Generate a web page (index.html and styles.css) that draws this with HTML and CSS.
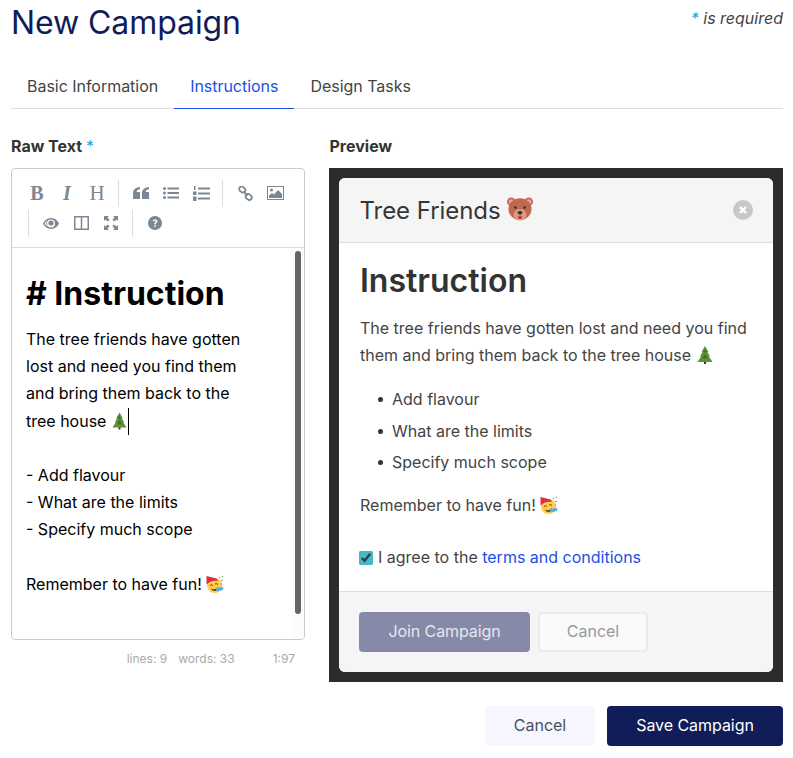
FILE: index.html
```html
<!DOCTYPE html>
<html lang="en">
<head>
    <meta charset="UTF-8">
    <meta name="viewport" content="width=device-width, initial-scale=1.0">
    <title>New Campaign</title>
    <link rel="stylesheet" href="styles.css">
</head>
<body>
    <svg class="sprites" width="0" height="0">
        <defs>
            <symbol id="tree" viewBox="0 0 36 36">
                <rect x="16" y="30" width="4" height="6" fill="#662113"/>
                <path d="M18 0 11 12h2L8 21h2L3 32h30L26 21h2l-5-9h2z" fill="#5c913b"/>
                <path d="M18 6l-3 7h6zM18 16l-5 9h10z" fill="#3e721d"/>
            </symbol>
            <symbol id="party" viewBox="0 0 36 36">
                <circle cx="17" cy="21" r="15" fill="#ffcc4d"/>
                <path d="M1 19 1 2l20 5 3 5C15 10 7 13 1 19z" fill="#dd2e44"/>
                <path d="M8 21q3-3 6 0M18 18q3-2 6 1" fill="none" stroke="#664500" stroke-width="2"/>
                <path d="M10 27q8 4 14-3-1 8-7 8-5 0-7-5z" fill="#664500"/>
                <path d="M19 27l11-3 5 1-1 5-12 3z" fill="#55acee"/>
                <circle cx="27" cy="5" r="1.5" fill="#55acee"/>
                <circle cx="32" cy="11" r="1.5" fill="#dd2e44"/>
                <circle cx="33" cy="3" r="1.5" fill="#77b255"/>
                <circle cx="31" cy="18" r="1.5" fill="#55acee"/>
            </symbol>
            <symbol id="bear" viewBox="0 0 36 36">
                <circle cx="6" cy="8" r="6" fill="#c1694f"/>
                <circle cx="30" cy="8" r="6" fill="#c1694f"/>
                <circle cx="6" cy="8" r="3.5" fill="#e6aaaa"/>
                <circle cx="30" cy="8" r="3.5" fill="#e6aaaa"/>
                <ellipse cx="18" cy="18" rx="16" ry="15" fill="#c1694f"/>
                <ellipse cx="18" cy="26" rx="9" ry="8" fill="#d99e82"/>
                <circle cx="11.5" cy="16" r="1.8" fill="#292f33"/>
                <circle cx="24.5" cy="16" r="1.8" fill="#292f33"/>
                <ellipse cx="18" cy="23" rx="3.5" ry="2.3" fill="#292f33"/>
                <path d="M18 25v2" stroke="#292f33" stroke-width="1.2"/>
                <path d="M15 28h6q0 4-3 4t-3-4z" fill="#dd2e44"/>
            </symbol>
        </defs>
    </svg>

    <div class="page">
        <div class="page-head">
            <h1 class="page-title">New Campaign</h1>
            <div class="required-note"><span class="star">*</span> is required</div>
        </div>

        <div class="tabs">
            <a class="tab">Basic Information</a>
            <a class="tab active">Instructions</a>
            <a class="tab">Design Tasks</a>
        </div>

        <div class="columns">
            <div class="col-raw">
                <div class="field-label">Raw Text <span class="star">*</span></div>
                <div class="editor">
                    <div class="toolbar">
                        <span class="tool glyph-b">B</span>
                        <span class="tool glyph-i">I</span>
                        <span class="tool glyph-h">H</span>
                        <i class="sep"></i>
                        <span class="tool">
                            <svg width="16" height="12" viewBox="0 0 16 12"><path d="M0 6.5C0 3 2 .5 7 0v2.300C5 2.600 3.800 3.400 3.600 5H7v7H0zM9 6.500C9 3 11 .5 16 0v2.300C14 2.600 12.800 3.400 12.600 5H16v7H9z" fill="#7c8792"/></svg>
                        </span>
                        <span class="tool">
                            <svg width="16" height="12" viewBox="0 0 16 12"><g fill="#7c8792"><circle cx="1.5" cy="1.5" r="1.5"/><circle cx="1.5" cy="6" r="1.5"/><circle cx="1.5" cy="10.5" r="1.5"/><rect x="4.5" y=".5" width="11.5" height="2"/><rect x="4.5" y="5" width="11.5" height="2"/><rect x="4.5" y="9.5" width="11.5" height="2"/></g></svg>
                        </span>
                        <span class="tool">
                            <svg width="17" height="15" viewBox="0 0 17 15"><g fill="#7c8792"><rect x="1" y="0" width="1.5" height="4"/><rect x="0" y="5.5" width="3.5" height="3.5"/><rect x="0" y="10.5" width="3.5" height="4.5"/><rect x="5" y="1.5" width="12" height="2"/><rect x="5" y="6.5" width="12" height="2"/><rect x="5" y="11.5" width="12" height="2"/></g></svg>
                        </span>
                        <i class="sep"></i>
                        <span class="tool">
                            <svg width="15" height="15" viewBox="0 0 15 15"><g fill="none" stroke="#7c8792" stroke-width="1.8"><rect x="1" y="1" width="6.5" height="5" rx="2.5" transform="rotate(40 4.200 3.500)"/><rect x="7.5" y="8.5" width="6.5" height="5" rx="2.5" transform="rotate(40 10.700 11)"/><path d="M5.500 5.500l4 4"/></g></svg>
                        </span>
                        <span class="tool">
                            <svg width="17" height="14" viewBox="0 0 17 14"><rect x=".5" y=".5" width="16" height="13" fill="#fff" stroke="#7c8792"/><path d="M2 12V9.500L5 7l2 1.500L11 4l4 4v4z" fill="#7c8792"/><circle cx="4.5" cy="4" r="1.5" fill="#7c8792"/></svg>
                        </span>
                        <i class="sep"></i>
                        <span class="tool">
                            <svg width="16" height="11" viewBox="0 0 16 11"><path d="M8 0C4.500 0 1.500 2.200 0 5.500 1.500 8.800 4.500 11 8 11s6.500-2.200 8-5.500C14.500 2.200 11.500 0 8 0zm0 9.500a4 4 0 1 1 0-8 4 4 0 0 1 0 8zM1.500 5.500C2.300 4 3.400 3 4.500 2.300a5 5 0 0 0 0 6.400C3.400 8 2.300 7 1.500 5.500z" fill="#7c8792" fill-rule="evenodd"/><circle cx="8" cy="5" r="2.6" fill="#7c8792"/></svg>
                        </span>
                        <span class="tool">
                            <svg width="15" height="14" viewBox="0 0 15 14"><path d="M.75.75h13.500v12.500H.750zM7.500.75v12.500" fill="none" stroke="#7c8792" stroke-width="1.5"/></svg>
                        </span>
                        <span class="tool">
                            <svg width="14" height="14" viewBox="0 0 14 14"><g fill="#7c8792"><path d="M0 0h5L3.400 1.600 5.600 3.800 3.800 5.600 1.600 3.400 0 5zM14 0v5l-1.600-1.600-2.200 2.200-1.800-1.800 2.200-2.200L9 0zM0 14V9l1.600 1.600 2.200-2.200 1.800 1.800-2.200 2.200L5 14zM14 14H9l1.600-1.600-2.200-2.200 1.800-1.800 2.200 2.200L14 9z"/></g></svg>
                        </span>
                        <i class="sep"></i>
                        <span class="tool">
                            <svg width="14" height="14" viewBox="0 0 14 14"><circle cx="7" cy="7" r="7" fill="#7c8792"/><path d="M4.800 5.300C4.900 4 5.800 3.200 7.100 3.200c1.300 0 2.300.8 2.300 2 0 1.700-1.700 1.700-1.700 3H6.200c0-2 1.600-2 1.600-3 0-.4-.3-.7-.8-.7s-.8.300-.9.800zM6.200 9.200h1.600v1.600H6.200z" fill="#fff"/></svg>
                        </span>
                    </div>
                    <div class="editor-body">
                        <div class="raw-heading"># Instruction</div>
                        <div class="raw-line">The tree friends have gotten</div>
                        <div class="raw-line">lost and need you find them</div>
                        <div class="raw-line">and bring them back to the</div>
                        <div class="raw-line">tree house <svg class="emoji emoji-raw"><use href="#tree"/></svg><span class="caret"></span></div>
                        <div class="raw-line"></div>
                        <div class="raw-line">- Add flavour</div>
                        <div class="raw-line">- What are the limits</div>
                        <div class="raw-line">- Specify much scope</div>
                        <div class="raw-line"></div>
                        <div class="raw-line">Remember to have fun! <svg class="emoji"><use href="#party"/></svg></div>
                        <div class="scroll-track"></div>
                        <div class="scrollbar"></div>
                    </div>
                </div>
                <div class="statusbar">
                    <span>lines: 9</span>
                    <span>words: 33</span>
                    <span class="cursor-pos">1:97</span>
                </div>
            </div>

            <div class="col-preview">
                <div class="field-label preview-label">Preview</div>
                <div class="backdrop">
                    <div class="modal">
                        <div class="modal-head">
                            <span class="modal-title">Tree Friends <svg class="emoji emoji-lg"><use href="#bear"/></svg></span>
                            <span class="modal-close">
                                <svg width="10" height="10" viewBox="0 0 10 10"><path d="M2 2l6 6M8 2l-6 6" stroke="#fff" stroke-width="2.4"/></svg>
                            </span>
                        </div>
                        <div class="modal-body">
                            <h2 class="modal-h">Instruction</h2>
                            <p class="modal-p">The tree friends have gotten lost and need you find them and bring them back to the tree house <svg class="emoji"><use href="#tree"/></svg></p>
                            <ul class="modal-list">
                                <li>Add flavour</li>
                                <li>What are the limits</li>
                                <li>Specify much scope</li>
                            </ul>
                            <p class="modal-p">Remember to have fun! <svg class="emoji"><use href="#party"/></svg></p>
                            <label class="agree">
                                <input class="agree-box" type="checkbox" checked>
                                <span>I agree to the <a class="link">terms and conditions</a></span>
                            </label>
                        </div>
                        <div class="modal-foot">
                            <button class="btn btn-join">Join Campaign</button>
                            <button class="btn btn-ghost">Cancel</button>
                        </div>
                    </div>
                </div>
            </div>
        </div>

        <div class="actions">
            <button class="btn btn-cancel">Cancel</button>
            <button class="btn btn-save">Save Campaign</button>
        </div>
    </div>
</body>
</html>
```

FILE: styles.css
```css
* {
    box-sizing: border-box;
}
html, body {
    overflow: hidden;
}
body {
    margin: 0;
    height: 758px;
    background: #fff;
    color: #333;
    font-family: Inter, "Liberation Sans", sans-serif;
    font-size: 16px;
}
.sprites {
    position: absolute;
}
.page {
    padding: 0 10px 0 11px;
}
.page-head {
    display: flex;
    justify-content: space-between;
    align-items: flex-start;
    height: 66px;
}
.page-title {
    margin: 3px 0 0;
    font-size: 32px;
    line-height: 39px;
    font-weight: 400;
    letter-spacing: -0.08px;
    color: #111d58;
}
.required-note {
    margin-top: 9px;
    font-style: italic;
    font-size: 16px;
    line-height: 19px;
    color: #444;
}
.star {
    color: #2d9cdb;
}
.tabs {
    display: flex;
    height: 43px;
    border-bottom: 1px solid #ddd;
}
.tab {
    padding: 11px 16px 0;
    height: 43px;
    line-height: 19px;
    letter-spacing: -0.03px;
    color: #444;
}
.tab.active {
    color: #1a4fe8;
    border-bottom: 1px solid #1a4fe8;
}
.columns {
    display: grid;
    grid-template-columns: 294px 454px;
    gap: 24px;
    margin-top: 28px;
}
.field-label {
    font-weight: 700;
    line-height: 19px;
    margin-bottom: 12px;
    color: #333;
}
.field-label .star {
    font-weight: 400;
}
.preview-label {
    padding-left: 0.5px;
}
.editor {
    height: 472px;
    border: 1px solid #ccc;
    border-radius: 4px;
    overflow: hidden;
}
.toolbar {
    display: flex;
    flex-wrap: wrap;
    align-items: center;
    align-content: flex-start;
    height: 79px;
    padding: 9px 10px 0;
    border-bottom: 1px solid #ddd;
}
.tool {
    display: flex;
    align-items: center;
    justify-content: center;
    width: 30px;
    height: 30px;
    color: #7c8792;
    font-family: "Liberation Serif", serif;
    font-size: 20px;
    font-weight: 700;
}
.glyph-i {
    font-style: italic;
}
.glyph-h {
    font-size: 21px;
    font-weight: 400;
}
.sep {
    width: 1px;
    height: 27px;
    margin: 0 7px 0 6px;
    background: #ddd;
}
.editor-body {
    position: relative;
    height: 392px;
    padding: 27px 14px 0;
    color: #000;
}
.raw-heading {
    font-size: 32px;
    font-weight: 700;
    line-height: 38px;
    margin-bottom: 13px;
}
.raw-line {
    height: 27.2px;
    line-height: 27px;
    white-space: nowrap;
}
.emoji {
    display: inline-block;
    width: 18px;
    height: 18px;
    vertical-align: -3px;
}
.emoji-raw {
    width: 17px;
}
.emoji-lg {
    width: 26px;
    height: 26px;
    vertical-align: -3px;
}
.caret {
    display: inline-block;
    width: 1px;
    height: 27px;
    background: #000;
    vertical-align: -8px;
}
.scroll-track {
    position: absolute;
    top: 0;
    right: 0;
    width: 12px;
    height: 100%;
    background: #fcfcfc;
}
.scrollbar {
    position: absolute;
    top: 3px;
    right: 3px;
    width: 6px;
    height: 363px;
    border-radius: 3px;
    background: #666;
}
.statusbar {
    display: flex;
    gap: 11px;
    justify-content: flex-end;
    padding: 11px 10px 0 0;
    font-size: 12px;
    line-height: 15px;
    color: #aaa;
}
.cursor-pos {
    margin-left: 27px;
}
.backdrop {
    height: 514px;
    padding: 10px;
    background: #2c2c2c;
}
.modal {
    height: 494px;
    border-radius: 6px;
    background: #fff;
    overflow: hidden;
    display: flex;
    flex-direction: column;
}
.modal-head {
    display: flex;
    justify-content: space-between;
    align-items: center;
    height: 65px;
    padding: 0 20px 0 20.5px;
    background: #f5f5f5;
    border-bottom: 1px solid #ddd;
}
.modal-title {
    font-size: 24px;
    letter-spacing: -0.05px;
    color: #363636;
}
.modal-close {
    display: flex;
    align-items: center;
    justify-content: center;
    width: 20px;
    height: 20px;
    border-radius: 50%;
    background: #c8c8c8;
}
.modal-body {
    flex: 1;
    padding: 17px 20px 0 21px;
    color: #444;
}
.modal-h {
    margin: 0 0 13px;
    font-size: 32px;
    line-height: 42px;
    font-weight: 600;
    color: #333;
}
.modal-p {
    margin: 0 0 17px;
    line-height: 27.2px;
}
.modal-list {
    margin: 0 0 16px;
    padding-left: 32px;
    list-style: none;
    line-height: 27.2px;
}
.modal-list li {
    position: relative;
    margin-bottom: 4px;
}
.modal-list li::before {
    content: "";
    position: absolute;
    left: -14px;
    top: 11px;
    width: 5px;
    height: 5px;
    border-radius: 50%;
    background: #333;
}
.agree {
    display: flex;
    align-items: center;
    gap: 5px;
    margin: 25px 0 0 -1px;
    line-height: 27px;
}
.agree-box {
    width: 14px;
    height: 14px;
    margin: 0;
    accent-color: #44b8c8;
}
.link {
    color: #1a4fe8;
}
.modal-foot {
    display: flex;
    gap: 8px;
    height: 81px;
    padding: 20px 20px 0;
    background: #f5f5f5;
    border-top: 1px solid #ddd;
}
.btn {
    height: 40px;
    padding-bottom: 3px;
    border: 0;
    border-radius: 4px;
    font-family: inherit;
    font-size: 16px;
}
.btn-join {
    width: 171px;
    letter-spacing: -0.1px;
    background: #8689a8;
    color: #e6e7ee;
}
.btn-ghost {
    width: 110px;
    background: #fafafa;
    border: 2px solid #ebebeb;
    color: #999;
}
.actions {
    display: flex;
    justify-content: flex-end;
    gap: 12px;
    margin-top: 24px;
}
.btn-cancel {
    width: 110px;
    background: #f6f7fe;
    color: #4a4f5c;
}
.btn-save {
    width: 176px;
    letter-spacing: -0.05px;
    background: #111d58;
    color: #fff;
}
```
